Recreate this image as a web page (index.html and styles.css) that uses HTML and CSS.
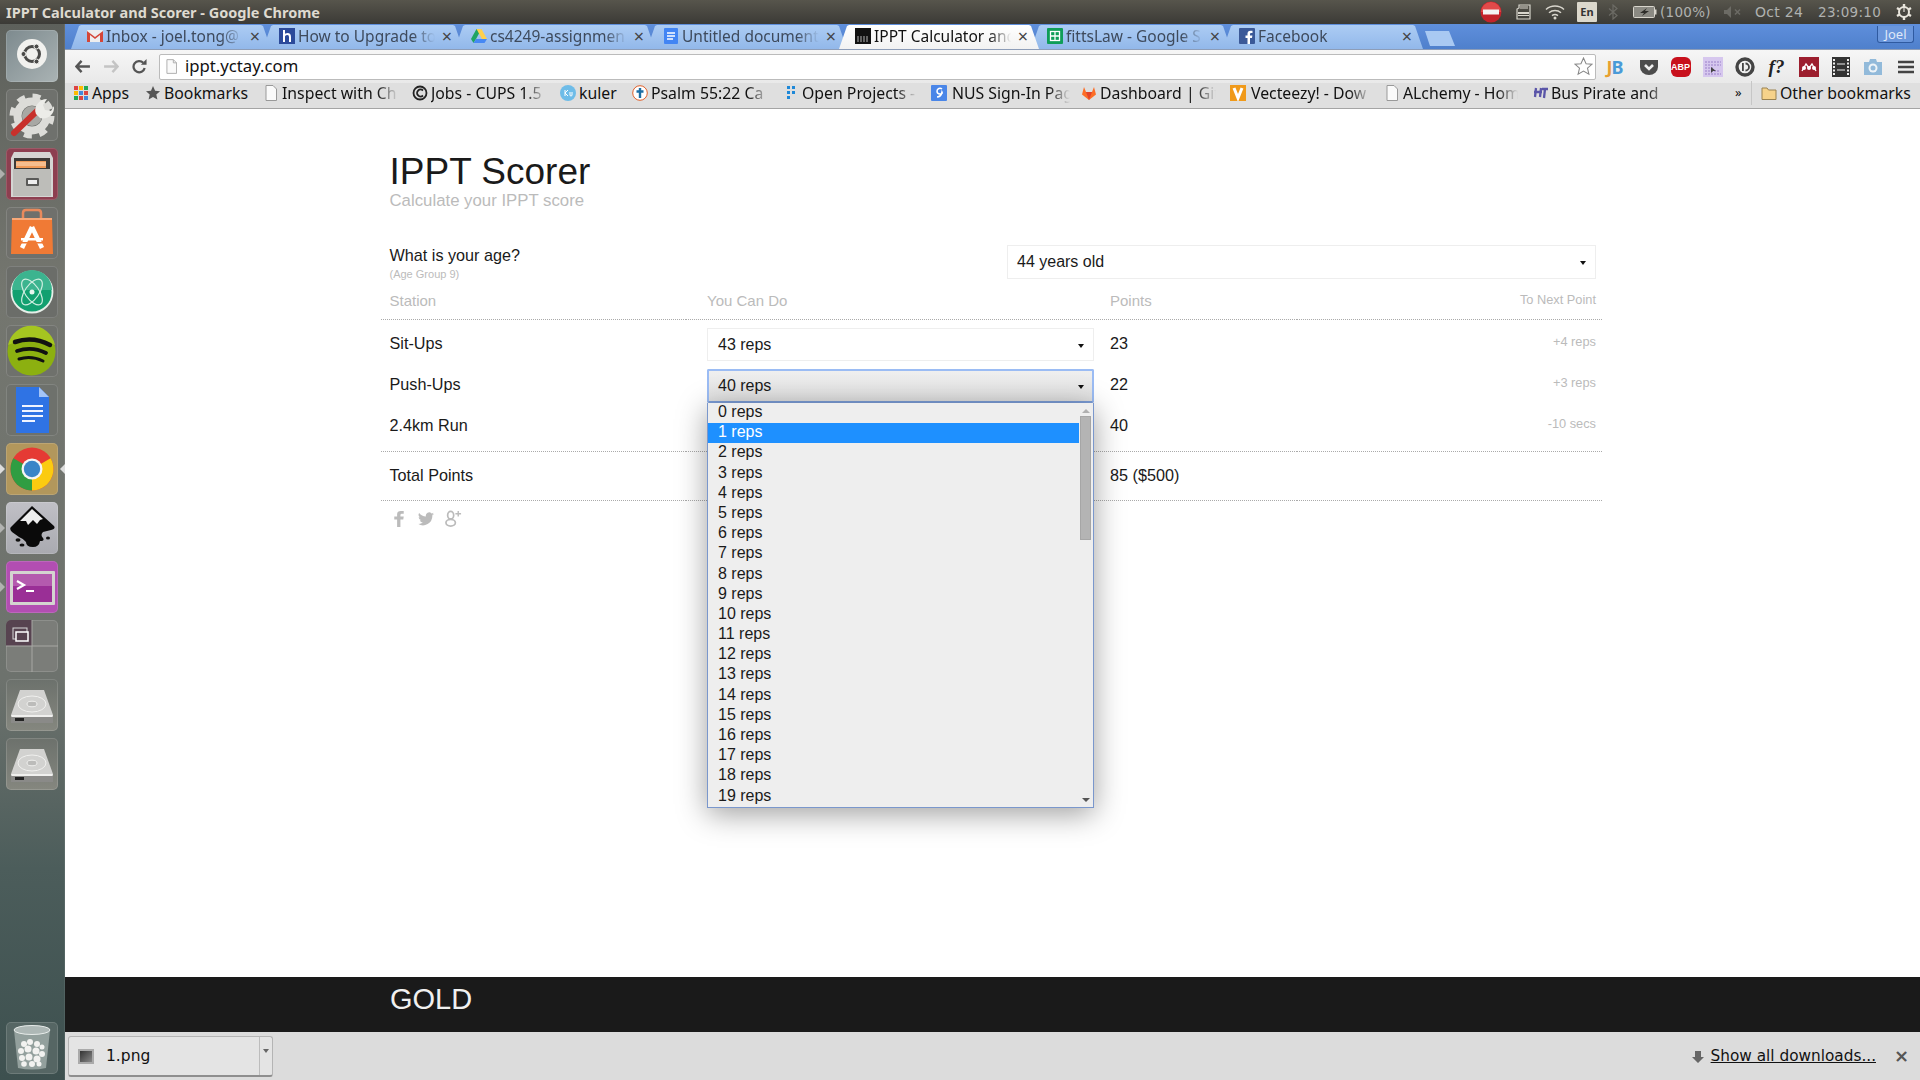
FILE: index.html
```html
<!DOCTYPE html>
<html lang="en">
<head>
<meta charset="utf-8">
<title>IPPT Calculator and Scorer</title>
<link rel="stylesheet" href="styles.css">
</head>
<body>
<div class="desktop">
  <header class="panel">
    <div class="panel-title">IPPT Calculator and Scorer - Google Chrome</div>
    <div class="indicators">
      <svg class="ind ind-stop" viewBox="0 0 22 22"><circle cx="11" cy="11" r="10.500" fill="#c4232b"/><path d="M1 11a10 10 0 0 1 20 0z" fill="#e04a4a"/><rect x="3" y="8.500" width="16" height="5" fill="#f4f4f4"/></svg>
      <svg class="ind ind-sd" viewBox="0 0 16 16"><path d="M3 1h11v14H1V5l2-1z" fill="none" stroke="#d8d5cc" stroke-width="1.200"/><path d="M2 8h11v2H2zM2 11h11v1H2z" fill="#d8d5cc"/><path d="M5 2v3M7 2v3M9 2v3M11 2v3" stroke="#d8d5cc"/></svg>
      <svg class="ind ind-wifi" viewBox="0 0 20 16"><path d="M1 5.500c5-4.600 13-4.600 18 0M4 8.700c3.400-3 8.600-3 12 0M7 11.700c1.700-1.400 4.300-1.400 6 0" fill="none" stroke="#d8d5cc" stroke-width="1.500"/><circle cx="10" cy="14" r="1.500" fill="#d8d5cc"/></svg>
      <span class="ind-en">En</span>
      <svg class="ind ind-bt" viewBox="0 0 10 16"><path d="M1 4.500l8 7-4 3.500V1l4 3.500-8 7" fill="none" stroke="#6c6b65" stroke-width="1.200"/></svg>
      <svg class="ind ind-batt" viewBox="0 0 24 12"><rect x=".5" y=".5" width="21" height="11" rx="1" fill="#8b8a83" stroke="#d8d5cc"/><rect x="22" y="3.500" width="1.500" height="5" fill="#d8d5cc"/><path d="M14 2L7 7h4l-2 3 7-5h-4z" fill="#2e2d29"/></svg>
      <span class="ind-text ind-pct">(100%)</span>
      <svg class="ind ind-vol" viewBox="0 0 18 12"><path d="M0 4h3l4-4v12L3 8H0z" fill="#6c6b65"/><path d="M11 3.500l5 5M16 3.500l-5 5" stroke="#6c6b65" stroke-width="1.500"/></svg>
      <span class="ind-text ind-date">Oct 24</span>
      <span class="ind-text ind-time">23:09:10</span>
      <svg class="ind ind-gear" viewBox="0 0 16 16"><circle cx="8" cy="8" r="5" fill="none" stroke="#e8e5dc" stroke-width="2"/><path d="M8 0v3M1 4l2.500 1.500M15 4l-2.500 1.500M1 12l2.500-1.500M15 12l-2.500-1.500M8 16v-3" stroke="#e8e5dc" stroke-width="2.400"/><path d="M8 4v5" stroke="#3c3b37" stroke-width="2"/><path d="M8 3v5" stroke="#e8e5dc" stroke-width="1.200"/></svg>
    </div>
  </header>

  <div class="workarea">
    <nav class="launcher">
      <div class="tile tile-dash"><svg viewBox="0 0 52 52"><circle cx="26" cy="24" r="15" fill="#f1f1ee"/><circle cx="26" cy="24" r="7.500" fill="none" stroke="#4a4a48" stroke-width="3"/><circle cx="17.500" cy="24" r="2.500" fill="#4a4a48" stroke="#f1f1ee"/><circle cx="30.500" cy="16.500" r="2.500" fill="#4a4a48" stroke="#f1f1ee"/><circle cx="30.500" cy="31.500" r="2.500" fill="#4a4a48" stroke="#f1f1ee"/></svg></div>
      <div class="tile tile-set"><svg viewBox="0 0 52 52"><circle cx="26" cy="27" r="20" fill="none" stroke="#dcdcd8" stroke-width="5" stroke-dasharray="8 7.700"/><circle cx="26" cy="27" r="14.500" fill="none" stroke="#dcdcd8" stroke-width="8"/><circle cx="26" cy="27" r="10" fill="#a8a8a4"/><path d="M8 44l24-23" stroke="#c8302b" stroke-width="6" stroke-linecap="round"/><path d="M30 25c-3-7 3-15 11-15l-4 6 2 5 6 1 3-5c1 9-7 14-14 12z" fill="#ececE8"/></svg></div>
      <div class="tile tile-files running"><svg viewBox="0 0 52 52"><path d="M8 4h36l3 6v39H5V10z" fill="#d5d5d3"/><rect x="8" y="10" width="36" height="14" fill="#3d3b38"/><rect x="10" y="13" width="30" height="7" fill="#ef9a58"/><path d="M10 15h30M10 17h30" stroke="#fbe0c4"/><rect x="7" y="21" width="38" height="27" fill="#bdbdb9"/><rect x="20" y="30" width="13" height="8" rx="1" fill="#5a5a58"/><rect x="22" y="32" width="9" height="4" fill="#eee"/></svg></div>
      <div class="tile tile-soft"><svg viewBox="0 0 52 52"><path d="M17 12V6q0-3 3-3h12q3 0 3 3v6" fill="none" stroke="#e98a5c" stroke-width="2.500"/><path d="M6 11h40l1 36H5z" fill="#f07a35"/><path d="M6 11h40v2H6z" fill="#f8a878"/><path d="M26 20l-10 21M26 20l10 21" fill="none" stroke="#fff" stroke-width="4.500"/><rect x="15" y="31" width="22" height="2.500" fill="#fff"/><rect x="13" y="35" width="26" height="1.500" fill="#f07a35"/></svg></div>
      <div class="tile tile-atom"><svg viewBox="0 0 52 52"><circle cx="26" cy="26" r="20.500" fill="#12a070" stroke="#e6efe9" stroke-width="1.800"/><path d="M6 24a20 20 0 0 1 40 0z" fill="#3cb48f"/><g fill="none" stroke="#cfeee0" stroke-width="1.200"><ellipse cx="26" cy="26" rx="7" ry="15" transform="rotate(-35 26 26)"/><ellipse cx="26" cy="26" rx="7" ry="15" transform="rotate(35 26 26)"/></g><circle cx="26" cy="26" r="2.500" fill="#e6f5ee"/></svg></div>
      <div class="tile tile-spot"><svg viewBox="0 0 52 52"><circle cx="25.500" cy="26.500" r="24" fill="#8cb010"/><path d="M2 20a24 24 0 0 1 47 0q-23-10-47 0z" fill="#a5c520"/><g fill="none" stroke="#111" stroke-linecap="round"><path d="M9 17q18-6 35 3" stroke-width="4.500"/><path d="M11 26q15-5 29 2" stroke-width="3.800"/><path d="M13 34q12-4 24 2" stroke-width="3"/></g></svg></div>
      <div class="tile tile-docs"><svg viewBox="0 0 52 52"><path d="M10 3h23l10 10v36H10z" fill="#2f73e4"/><path d="M33 3l10 10H33z" fill="#a4c4f6"/><path d="M16 22h21M16 27h21M16 32h21M16 37h13" stroke="#f0f4ff" stroke-width="2.200"/></svg></div>
      <div class="tile tile-chrome focused"><svg viewBox="0 0 52 52"><circle cx="26" cy="26" r="21.500" fill="#e53a34"/><path d="M26 26L44.600 15.300A21.500 21.500 0 0 1 26 47.500z" fill="#fbcb10"/><path d="M26 26V47.500A21.500 21.500 0 0 1 7.400 15.300z" fill="#2f9d42"/><circle cx="26" cy="26" r="10.500" fill="#f5f5f5"/><circle cx="26" cy="26" r="8.200" fill="#3a85c8"/></svg></div>
      <div class="tile tile-ink running"><svg viewBox="0 0 52 52"><path d="M26 4L48 24q2 3-3 4l-8 2q-3 3 0 6 2 3-3 3-1 6-7 6-7 0-7-5-2-3-7-5l-7-5q-3-3-1-5z" fill="#0a0a0a"/><path d="M26 7l11 10-3 1-3 4-4-4-5 5-2-4-6 0z" fill="#eee"/><ellipse cx="12" cy="38" rx="2.500" ry="1.800" fill="#111"/><ellipse cx="16" cy="43" rx="2.500" ry="1.500" fill="#111"/><ellipse cx="42" cy="36" rx="2" ry="1.500" fill="#111"/></svg></div>
      <div class="tile tile-term running"><svg viewBox="0 0 52 52"><rect x="4" y="10" width="45" height="34" rx="1" fill="#d4d4d0"/><rect x="7" y="13" width="39" height="28" fill="#9a2f96"/><path d="M7 13h39v12H7z" fill="#b45aae"/><path d="M11 20l7 4-7 4" fill="none" stroke="#fff" stroke-width="2.200"/><rect x="20" y="29" width="8" height="2" fill="#fff"/></svg></div>
      <div class="tile tile-ws"><svg viewBox="0 0 52 52"><rect x="0" y="0" width="26" height="26" fill="#574350"/><path d="M26 0v52M0 26h52" stroke="#a8a8a4" stroke-width="1"/><rect x="7" y="8" width="14" height="11" fill="none" stroke="#d8d8d8"/><rect x="10" y="12" width="12" height="9" fill="#574350" stroke="#fff" stroke-width="1.500"/></svg></div>
      <div class="tile tile-hdd"><svg viewBox="0 0 52 52"><path d="M14 11h24l9 25H5z" fill="#d2d2d0"/><path d="M5 36h42v8H5z" fill="#8a8a88"/><path d="M5 36h42l-.5 2H5.500z" fill="#f0f0ee"/><rect x="9" y="39" width="9" height="3" fill="#222"/><ellipse cx="26" cy="25" rx="14" ry="8" fill="none" stroke="#f0f0ee"/><ellipse cx="26" cy="25" rx="5" ry="2.800" fill="#bcbcba" stroke="#f0f0ee"/></svg></div>
      <div class="tile tile-hdd"><svg viewBox="0 0 52 52"><path d="M14 11h24l9 25H5z" fill="#d2d2d0"/><path d="M5 36h42v8H5z" fill="#8a8a88"/><path d="M5 36h42l-.5 2H5.500z" fill="#f0f0ee"/><rect x="9" y="39" width="9" height="3" fill="#222"/><ellipse cx="26" cy="25" rx="14" ry="8" fill="none" stroke="#f0f0ee"/><ellipse cx="26" cy="25" rx="5" ry="2.800" fill="#bcbcba" stroke="#f0f0ee"/></svg></div>
      <div class="tile tile-trash"><svg viewBox="0 0 52 52"><path d="M8 8l4 38q14 3 28 0l4-38z" fill="#93a09d"/><ellipse cx="26" cy="8" rx="18" ry="4.500" fill="#aeb8b6" stroke="#e8ecea"/><g fill="#f2f2f0"><circle cx="18" cy="22" r="3"/><circle cx="24" cy="20" r="3"/><circle cx="31" cy="22" r="3"/><circle cx="36" cy="25" r="2.500"/><circle cx="15" cy="29" r="3"/><circle cx="22" cy="27" r="3.500"/><circle cx="30" cy="29" r="3.500"/><circle cx="36" cy="32" r="3"/><circle cx="16" cy="36" r="3"/><circle cx="23" cy="35" r="3.500"/><circle cx="31" cy="37" r="3.500"/><circle cx="18" cy="42" r="2.800"/><circle cx="26" cy="42" r="3"/><circle cx="33" cy="42" r="2.500"/></g></svg></div>
    </nav>

    <div class="browser">
      <div class="tabstrip">
        <div class="tab">
          <svg class="fav" viewBox="0 0 16 16"><rect y="2" width="16" height="12" rx="1" fill="#eee"/><path d="M0 3l8 6 8-6v11h-3V7L8 11 3 7v7H0z" fill="#d44638"/></svg>
          <span class="tab-title">Inbox - joel.tong@</span><span class="tab-x">×</span>
        </div>
        <div class="tab">
          <svg class="fav" viewBox="0 0 16 16"><rect width="16" height="16" fill="#2c4a9a"/><path d="M5 2v12M5 8q1-2 3.500-2t2.500 3v5" fill="none" stroke="#fff" stroke-width="2"/></svg>
          <span class="tab-title">How to Upgrade to</span><span class="tab-x">×</span>
        </div>
        <div class="tab">
          <svg class="fav" viewBox="0 0 16 16"><path d="M5.500 1h5L5 11l-2.500 4L0 11z" fill="#1fa463"/><path d="M5.500 1h5L16 11h-5z" fill="#ffd04b"/><path d="M2.500 15L5 11h11l-2.500 4z" fill="#4688f4"/></svg>
          <span class="tab-title">cs4249-assignmen</span><span class="tab-x">×</span>
        </div>
        <div class="tab">
          <svg class="fav" viewBox="0 0 16 16"><rect x="1" width="14" height="16" rx="1" fill="#4285f4"/><path d="M4 5h8M4 8h8M4 11h6" stroke="#fff" stroke-width="1.300"/></svg>
          <span class="tab-title">Untitled document</span><span class="tab-x">×</span>
        </div>
        <div class="tab tab-active">
          <svg class="fav" viewBox="0 0 16 16"><rect width="16" height="16" fill="#111"/><path d="M2 9h12M2 11h12M2 13h12" stroke="#ddd" stroke-width=".8" stroke-dasharray="2 1"/></svg>
          <span class="tab-title">IPPT Calculator and</span><span class="tab-x">×</span>
        </div>
        <div class="tab">
          <svg class="fav" viewBox="0 0 16 16"><rect width="16" height="16" rx="1" fill="#0f9d58"/><rect x="3.500" y="3.500" width="9" height="9" fill="none" stroke="#fff" stroke-width="1.300"/><path d="M3.500 8h9M8 3.500v9" stroke="#fff" stroke-width="1.300"/></svg>
          <span class="tab-title">fittsLaw - Google S</span><span class="tab-x">×</span>
        </div>
        <div class="tab">
          <svg class="fav" viewBox="0 0 16 16"><rect width="16" height="16" rx="1" fill="#3b5998"/><path d="M11 16V10h2l.4-2.500H11V6q0-1 1-1h1.500V2.700H11.500Q8.500 2.700 8.500 5.700V7.500H6.500V10h2v6z" fill="#fff"/></svg>
          <span class="tab-title tab-title-plain">Facebook</span><span class="tab-x">×</span>
        </div>
        <div class="newtab"></div>
        <div class="profile">Joel</div>
      </div>

      <div class="toolbar">
        <svg class="nav" viewBox="0 0 16 14"><path d="M7 1L1.500 7 7 13M2 7h14" fill="none" stroke="#555" stroke-width="2.600"/></svg>
        <svg class="nav nav-fwd" viewBox="0 0 16 14"><path d="M9 1l5.500 6L9 13M14 7H0" fill="none" stroke="#c4c4c4" stroke-width="2.600"/></svg>
        <svg class="nav nav-rel" viewBox="0 0 16 16"><path d="M13.500 9.500A6 6 0 1 1 12 4" fill="none" stroke="#555" stroke-width="2.400"/><path d="M9.500 6h6V0z" fill="#555"/></svg>
        <div class="omnibox">
          <svg class="doc" viewBox="0 0 12 16"><path d="M1 .5h7l3.500 3.500v11.500H1z" fill="#fafafa" stroke="#aaa"/><path d="M8 .5V4h3.500" fill="none" stroke="#aaa"/></svg>
          <span class="url">ippt.yctay.com</span>
          <svg class="star" viewBox="0 0 20 20"><path d="M10 1l2.700 6 6.300.6-4.800 4.200 1.500 6.400L10 14.800l-5.700 3.400 1.500-6.400L1 7.600 7.300 7z" fill="#fff" stroke="#888" stroke-width="1.100"/></svg>
        </div>
        <div class="ext-row">
          <span class="ext ext-jb"><span class="jb-j">J</span><span class="jb-b">B</span></span>
          <svg class="ext" viewBox="0 0 20 20"><path d="M1 3h18v7a9 8 0 0 1-18 0z" fill="#4c4c4c"/><path d="M6 8l4 4 4-4" fill="none" stroke="#eee" stroke-width="2.600"/></svg>
          <span class="ext ext-abp">ABP</span>
          <svg class="ext" viewBox="0 0 20 20"><rect width="20" height="20" fill="#d6c7ee"/><path d="M2 5h16M2 8h16M2 11h8M2 14h14M2 17h16" stroke="#9a80c8" stroke-dasharray="2 1"/><path d="M8 10v6l2-2h3z" fill="#444"/></svg>
          <svg class="ext" viewBox="0 0 20 20"><circle cx="10" cy="10" r="8" fill="none" stroke="#444" stroke-width="3.400"/><rect x="7" y="6" width="1.800" height="8" fill="#444"/><path d="M10.500 6.500a3.500 3.500 0 0 1 0 7" fill="none" stroke="#444" stroke-width="1.800"/></svg>
          <span class="ext ext-f">f?</span>
          <svg class="ext" viewBox="0 0 20 20"><rect width="20" height="20" fill="#9c1e2e"/><circle cx="5" cy="11" r="2" fill="#fff"/><circle cx="10" cy="11" r="2" fill="#fff"/><circle cx="15" cy="11" r="2" fill="#fff"/><path d="M3 14l4-7 3 4 3-4 4 7" fill="none" stroke="#fff" stroke-width="1.300"/></svg>
          <svg class="ext" viewBox="0 0 20 20"><rect x="1" width="18" height="20" fill="#333"/><path d="M3 2v16M17 2v16" stroke="#eee" stroke-width="2" stroke-dasharray="2 1.500"/><path d="M6 7h8M6 13h8" stroke="#eee"/></svg>
          <svg class="ext" viewBox="0 0 20 20"><path d="M1 5h5l1-3h6l1 3h5v13H1z" fill="#92bada"/><circle cx="10" cy="11" r="4.500" fill="#eef4f8"/><circle cx="10" cy="11" r="2.500" fill="#92bada"/></svg>
          <svg class="ext ext-menu" viewBox="0 0 16 14"><path d="M0 2h16M0 7h16M0 12h16" stroke="#444" stroke-width="2.600"/></svg>
        </div>
      </div>

      <div class="bookmarks">
        <div class="bm bm-apps"><svg class="fav" viewBox="0 0 16 16"><g><rect x="1" y="1" width="4" height="4" fill="#d44"/><rect x="6" y="1" width="4" height="4" fill="#fb0"/><rect x="11" y="1" width="4" height="4" fill="#2a5"/><rect x="1" y="6" width="4" height="4" fill="#fb0"/><rect x="6" y="6" width="4" height="4" fill="#48d"/><rect x="11" y="6" width="4" height="4" fill="#d44"/><rect x="1" y="11" width="4" height="4" fill="#2a5"/><rect x="6" y="11" width="4" height="4" fill="#d44"/><rect x="11" y="11" width="4" height="4" fill="#48d"/></g></svg><span class="bm-text">Apps</span></div>
        <div class="bm bm-book"><svg class="fav" viewBox="0 0 16 16"><path d="M8 1l2.100 4.700 5 .5-3.800 3.300 1.100 5L8 11.900l-4.400 2.600 1.100-5L1 6.200l5-.5z" fill="#555"/></svg><span class="bm-text">Bookmarks</span></div>
        <div class="bm bm-w149"><svg class="fav" viewBox="0 0 12 16"><path d="M1 .5h7l3.500 3.500v11.500H1z" fill="#fafafa" stroke="#999"/></svg><span class="bm-text bm-fade">Inspect with Ch</span></div>
        <div class="bm bm-w148"><svg class="fav" viewBox="0 0 16 16"><circle cx="8" cy="8" r="6.500" fill="none" stroke="#222" stroke-width="1.800"/><path d="M11 5.500a3.500 3.500 0 1 0 0 5" fill="none" stroke="#222" stroke-width="1.800"/></svg><span class="bm-text bm-fade">Jobs - CUPS 1.5</span></div>
        <div class="bm bm-kuler"><svg class="fav" viewBox="0 0 16 16"><circle cx="8" cy="8" r="8" fill="#6ebce8"/><path d="M5 5v6M5 8l3-3M5 8l3 3M10 7v3q0 1 1 1t1-1V7" fill="none" stroke="#fff"/></svg><span class="bm-text">kuler</span></div>
        <div class="bm bm-psalm"><svg class="fav" viewBox="0 0 16 16"><circle cx="8" cy="8" r="7.300" fill="#fff" stroke="#e0602a"/><path d="M8 3v10M4.500 6.500h7" stroke="#1c6ea4" stroke-width="2.400"/></svg><span class="bm-text bm-fade">Psalm 55:22 Ca</span></div>
        <div class="bm bm-w148"><svg class="fav" viewBox="0 0 16 16"><g fill="#1e88d8"><rect x="4" y="1" width="3" height="3"/><rect x="9" y="1" width="3" height="3"/><rect x="4" y="6" width="3" height="3"/><rect x="9" y="6" width="3" height="3"/><rect x="4" y="11" width="3" height="3"/></g></svg><span class="bm-text bm-fade">Open Projects -</span></div>
        <div class="bm bm-nus"><svg class="fav" viewBox="0 0 16 16"><rect width="16" height="16" rx="1" fill="#4a86e8"/><path d="M11 4a3 3 0 0 0-5 2q0 3 3 3t2-2q-1 5-5 5" fill="none" stroke="#fff" stroke-width="1.500"/></svg><span class="bm-text bm-fade">NUS Sign-In Pag</span></div>
        <div class="bm bm-w149"><svg class="fav" viewBox="0 0 16 16"><path d="M8 15L1 9.500 3 2l2 5h6l2-5 2 7.500z" fill="#fc6d26"/><path d="M8 15L5 7h6z" fill="#e24329"/></svg><span class="bm-text bm-fade">Dashboard | Git</span></div>
        <div class="bm bm-vect"><svg class="fav" viewBox="0 0 16 16"><rect width="16" height="16" fill="#f09a1a"/><path d="M4 3l4 10 4-10" fill="none" stroke="#fff" stroke-width="3"/></svg><span class="bm-text bm-fade">Vecteezy! - Dow</span></div>
        <div class="bm bm-w148"><svg class="fav" viewBox="0 0 12 16"><path d="M1 .5h7l3.500 3.500v11.500H1z" fill="#fafafa" stroke="#999"/></svg><span class="bm-text bm-fade">ALchemy - Hom</span></div>
        <div class="bm bm-bus"><svg class="fav" viewBox="0 0 16 16"><path d="M4 3l-1 9M9 3l-1 9M2 7h8M10 4h6M13 4l-1 9" stroke="#5a55a8" stroke-width="2.300" fill="none"/></svg><span class="bm-text bm-fade">Bus Pirate and</span></div>
        <div class="bm-more">»</div>
        <div class="bm bm-other"><svg class="fav" viewBox="0 0 16 16"><path d="M1 3h5l1.500 2H15v9.500H1z" fill="#f6d28a" stroke="#9a8250"/></svg><span class="bm-text">Other bookmarks</span></div>
      </div>

      <main class="page">
        <section class="scorer">
          <h1 class="title">IPPT Scorer</h1>
          <p class="subtitle">Calculate your IPPT score</p>

          <div class="age-row">
            <div class="age-label">
              <div class="label">What is your age?</div>
              <div class="sublabel">(Age Group 9)</div>
            </div>
            <div class="select select-age"><span>44 years old</span><i class="caret"></i></div>
          </div>

          <div class="grid head">
            <div>Station</div>
            <div>You Can Do</div>
            <div>Points</div>
            <div class="next-head">To Next Point</div>
          </div>

          <div class="rows">
            <div class="grid row">
              <div class="label">Sit-Ups</div>
              <div class="select"><span>43 reps</span><i class="caret"></i></div>
              <div class="label">23</div>
              <div class="next">+4 reps</div>
            </div>
            <div class="grid row">
              <div class="label">Push-Ups</div>
              <div class="select-wrap">
                <div class="select select-open"><span>40 reps</span><i class="caret"></i></div>
                <div class="popup">
                  <div class="opts">
                    <div class="opt">0 reps</div>
                    <div class="opt opt-on">1 reps</div>
                    <div class="opt">2 reps</div>
                    <div class="opt">3 reps</div>
                    <div class="opt">4 reps</div>
                    <div class="opt">5 reps</div>
                    <div class="opt">6 reps</div>
                    <div class="opt">7 reps</div>
                    <div class="opt">8 reps</div>
                    <div class="opt">9 reps</div>
                    <div class="opt">10 reps</div>
                    <div class="opt">11 reps</div>
                    <div class="opt">12 reps</div>
                    <div class="opt">13 reps</div>
                    <div class="opt">14 reps</div>
                    <div class="opt">15 reps</div>
                    <div class="opt">16 reps</div>
                    <div class="opt">17 reps</div>
                    <div class="opt">18 reps</div>
                    <div class="opt">19 reps</div>
                  </div>
                  <div class="scroll">
                    <i class="arrow-up"></i>
                    <div class="thumb"></div>
                    <i class="arrow-down"></i>
                  </div>
                </div>
              </div>
              <div class="label">22</div>
              <div class="next">+3 reps</div>
            </div>
            <div class="grid row row-last">
              <div class="label">2.4km Run</div>
              <div></div>
              <div class="label">40</div>
              <div class="next">-10 secs</div>
            </div>
          </div>

          <div class="grid total">
            <div class="label">Total Points</div>
            <div></div>
            <div class="label">85 ($500)</div>
            <div></div>
          </div>

          <div class="social">
            <svg class="soc soc-f" viewBox="0 0 12 18"><path d="M4 18V10H1V7h3V4.500Q4 1 8 1h3v3H9Q7.500 4 7.500 5.500V7H11l-.5 3h-3v8z" fill="#bbb"/></svg>
            <svg class="soc soc-t" viewBox="0 0 24 20"><path d="M24 2.500a10 10 0 0 1-2.800.8 5 5 0 0 0 2.200-2.700 10 10 0 0 1-3.100 1.200 4.900 4.900 0 0 0-8.400 4.500A14 14 0 0 1 1.700 1 4.900 4.900 0 0 0 3.200 7.600 5 5 0 0 1 1 7a4.900 4.900 0 0 0 3.900 4.800 5 5 0 0 1-2.200.1 4.900 4.900 0 0 0 4.600 3.400A10 10 0 0 1 0 17.300 14 14 0 0 0 21.500 5q0-.3 0-.6A10 10 0 0 0 24 2.500z" fill="#bbb"/></svg>
            <svg class="soc soc-g" viewBox="0 0 18 18"><ellipse cx="6" cy="5.500" rx="3.200" ry="4" fill="none" stroke="#bbb" stroke-width="1.800"/><ellipse cx="6" cy="13.500" rx="5" ry="3.500" fill="none" stroke="#bbb" stroke-width="1.800"/><path d="M14 1v6M11 4h6" stroke="#bbb" stroke-width="1.500"/></svg>
          </div>
        </section>
        <footer class="gold"><span>GOLD</span></footer>
      </main>

      <div class="shelf">
        <div class="dl-item">
          <div class="dl-main"><i class="dl-thumb"></i><span class="dl-name">1.png</span></div>
          <div class="dl-drop"><i class="dl-caret"></i></div>
        </div>
        <div class="shelf-right">
          <svg class="dl-arrow" viewBox="0 0 12 12"><path d="M3 0h6v6h3l-6 6-6-6h3z" fill="#666"/></svg>
          <span class="dl-all">Show all downloads...</span>
          <span class="dl-close">×</span>
        </div>
      </div>
    </div>
  </div>
</div>
</body>
</html>
```

FILE: styles.css
```css
* { box-sizing: border-box; }
html, body { margin: 0; height: 100%; overflow: hidden; }
body { font-family: "Liberation Sans", Arial, sans-serif; color: #1a1a1a; background: #fff; }
.desktop { width: 1920px; height: 1080px; display: flex; flex-direction: column; }

/* Top panel */
.panel { height: 24px; flex: none; display: flex; align-items: center; justify-content: space-between; background: linear-gradient(#57554c, #3b3a36); }
.panel-title { padding-left: 6px; font: 700 14.500px "Noto Sans", sans-serif; color: #dedad0; }
.indicators { display: flex; align-items: center; height: 24px; }
.ind { display: block; flex: none; }
.ind-stop { width: 22px; height: 22px; margin-right: 14px; }
.ind-sd { width: 16px; height: 16px; margin-right: 13px; }
.ind-wifi { width: 20px; height: 16px; margin-right: 12px; }
.ind-en { width: 20px; height: 20px; margin-right: 11px; background: #dcd8cc; color: #333; font: 700 11px/20px "Noto Sans", sans-serif; text-align: center; border-radius: 1px; }
.ind-bt { width: 10px; height: 16px; margin-right: 15px; }
.ind-batt { width: 24px; height: 12px; margin-right: 3px; }
.ind-text { font: 14px "DejaVu Sans", sans-serif; color: #b0b2b0; white-space: nowrap; letter-spacing: .3px; }
.ind-pct { width: 52px; margin-right: 12px; font-size: 13.500px; }
.ind-vol { width: 18px; height: 12px; margin-right: 13px; }
.ind-date { width: 48px; margin-right: 15px; font-size: 14px; }
.ind-time { width: 66px; margin-right: 12px; font-size: 13.500px; }
.ind-gear { width: 16px; height: 16px; margin-right: 8px; }

/* Launcher */
.workarea { flex: 1; min-height: 0; display: flex; }
.launcher { width: 65px; flex: none; display: flex; flex-direction: column; gap: 7px; padding: 6px 7px 6px 6px; background: linear-gradient(#5d605b 0%, #74766f 25%, #6d726d 62%, #4c5d5b 80%, #3d504f 100%); box-shadow: inset -1px 0 0 rgba(255,255,255,.08); }
.tile { position: relative; width: 52px; height: 52px; flex: none; border-radius: 5px; box-shadow: inset 0 0 0 1px rgba(255,255,255,.14); background: #777974; }
.tile svg { display: block; width: 52px; height: 52px; border-radius: 5px; overflow: visible; }
.tile-dash { background: linear-gradient(135deg, #7d8a8e, #aab3b4); }
.tile-set { background: #6f716d; }
.tile-files { background: #8d3f50; }
.tile-soft { background: #6f706c; }
.tile-atom { background: #6b6d69; }
.tile-spot { background: #6f716c; }
.tile-docs { background: #6e716c; }
.tile-chrome { background: #b2975c; }
.tile-ink { background: linear-gradient(#c0c0c6, #a9aab0); }
.tile-term { background: #b24eb2; }
.tile-ws { background: #7b7d79; overflow: hidden; }
.tile-hdd { background: linear-gradient(#6c716c, #85877f); }
.tile-trash { margin-top: auto; background: #566664; }
.running::before, .focused::before { content: ""; position: absolute; left: -6px; top: 21px; border-left: 5px solid #ddd; border-top: 5px solid transparent; border-bottom: 5px solid transparent; }
.running::before { opacity: .6; }
.focused::after { content: ""; position: absolute; right: -7px; top: 21px; border-right: 5px solid #ddd; border-top: 5px solid transparent; border-bottom: 5px solid transparent; }

/* Browser */
.browser { flex: 1; min-width: 0; display: flex; flex-direction: column; }
.tabstrip { position: relative; height: 25px; flex: none; display: flex; align-items: flex-end; padding-left: 6px; background: linear-gradient(#5f8fdc, #4f80cc); }
.tab { position: relative; width: 200px; height: 24px; flex: none; margin-right: -8px; padding: 0 0 2px 16px; display: flex; align-items: center; background: linear-gradient(#acccf4, #92b8ea); clip-path: polygon(0 100%, 8px 1px, 10px 0, 190px 0, 192px 1px, 200px 100%); font: 15.500px "Noto Sans", sans-serif; color: #3e4a5c; }
.tab-active { z-index: 2; background: linear-gradient(#fff, #f2f2f2); color: #111; }
.fav { width: 16px; height: 16px; flex: none; display: block; }
.tab-title { width: 137px; flex: none; margin-left: 3px; white-space: nowrap; -webkit-mask-image: linear-gradient(90deg, #000 84%, transparent 100%); mask-image: linear-gradient(90deg, #000 84%, transparent 100%); }
.tab-x { width: 14px; margin-left: 5px; text-align: center; font-size: 18px; line-height: 20px; color: #444; }
.newtab { width: 30px; height: 15px; margin: 0 0 3px 10px; background: #a9c9f2; clip-path: polygon(5px 100%, 0 0, 24px 0, 30px 100%); align-self: flex-end; }
.profile { position: absolute; right: 6px; top: 2px; width: 37px; height: 17px; border: 1px solid #2f5aa0; border-top: 0; border-radius: 0 0 3px 3px; background: #6a96dc; color: #dfe8f8; font: 13px/16px "Noto Sans", sans-serif; text-align: center; }

.toolbar { height: 34px; flex: none; display: flex; align-items: center; padding-left: 10px; background: linear-gradient(#f6f6f6, #e9e9e9); border-top: 1px solid #8d9db8; }
.nav { width: 15px; height: 13px; display: block; flex: none; }
.nav-fwd { margin-left: 14px; }
.nav-rel { margin-left: 13px; width: 15px; height: 15px; }
.omnibox { width: 1437px; height: 26px; margin-left: 12px; flex: none; display: flex; align-items: center; padding-left: 6px; background: #fff; border: 1px solid #bbb; border-radius: 2px; }
.doc { width: 11px; height: 15px; flex: none; }
.url { margin: -2px 0 0 8px; font: 16.700px "Noto Sans", sans-serif; color: #111; }
.star { width: 19px; height: 19px; margin-left: auto; margin-right: 2px; flex: none; }
.ext-row { display: flex; align-items: center; margin-left: 10.500px; gap: 12px; }
.ext { width: 20px; height: 20px; display: block; flex: none; }
.ext-jb { font: 700 18px/20px "Noto Sans", sans-serif; white-space: nowrap; letter-spacing: -1px; }
.jb-j { color: #e8a030; }
.jb-b { color: #4a9ad8; }
.ext-abp { border-radius: 6px; background: #c8101c; color: #fff; font: 700 9px/20px "Liberation Sans", sans-serif; text-align: center; }
.ext-f { font: italic 700 19px/20px "Liberation Serif", serif; color: #222; text-align: center; }
.ext-menu { width: 16px; height: 14px; margin-left: 3px; }

.bookmarks { height: 26px; flex: none; display: flex; align-items: center; padding: 0 0 5px 8px; background: #dfdfdf; border-bottom: 1px solid #a4a4a4; font: 15.800px "Noto Sans", sans-serif; color: #111; }
.bm { display: flex; align-items: center; flex: none; white-space: nowrap; }
.bm-text { margin-left: 3px; }
.bm-fade { -webkit-mask-image: linear-gradient(90deg, #000 82%, transparent 100%); mask-image: linear-gradient(90deg, #000 82%, transparent 100%); }
.bm-apps { width: 72px; }
.bm-book { width: 118px; }
.bm-w149 { width: 149px; }
.bm-w149 .bm-text { width: 116px; }
.bm-w148 { width: 148px; }
.bm-w148 .bm-text { width: 115px; }
.bm-kuler { width: 72px; }
.bm-psalm { width: 151px; }
.bm-psalm .bm-text { width: 118px; }
.bm-nus { width: 150px; }
.bm-nus .bm-text { width: 118px; margin-left: 5px; }
.bm-vect { width: 154px; }
.bm-vect .bm-text { width: 120px; margin-left: 5px; }
.bm-bus { width: 203px; }
.bm-bus .bm-text { width: 118px; }
.bm-more { width: 17px; font-size: 13px; border-right: 1px solid #c6c6c6; height: 24px; line-height: 22px; flex: none; }
.bm-other { margin-left: 9px; }

/* Page */
.page { flex: 1; min-height: 0; display: flex; flex-direction: column; background: #fff; }
.scorer { flex: 1; min-height: 0; width: 1223px; margin-left: 315px; padding-top: 43px; }
.title { margin: 0 0 0 9.500px; font-size: 37px; line-height: 40px; font-weight: 400; color: #1a1a1a; }
.subtitle { margin: -1px 0 0 9.500px; font-size: 16.800px; line-height: 20px; color: #bbb; }
.age-row { display: flex; justify-content: space-between; align-items: flex-start; margin-top: 34px; padding: 0 7px 0 9.500px; height: 46px; }
.label { font-size: 16.200px; line-height: 20px; color: #1a1a1a; }
.sublabel { margin-top: 2px; font-size: 11px; line-height: 14px; color: #bbb; }
.select { position: relative; display: flex; align-items: center; height: 33px; padding-left: 10px; border: 1px solid #eee; background: #fff; font-size: 16px; color: #1a1a1a; }
.select-age { width: 589px; height: 34px; padding-left: 9px; }
.caret { position: absolute; right: 9px; top: 50%; margin-top: -1px; border-top: 4px solid #111; border-left: 3.500px solid transparent; border-right: 3.500px solid transparent; }
.grid { display: grid; grid-template-columns: 317.500px 403px 1fr auto; padding: 0 7px 0 9.500px; }
.head { height: 29px; font-size: 15px; line-height: 20px; color: #bbb; border-bottom: 1px solid transparent; border-image: repeating-linear-gradient(90deg, #aaa 0 1px, transparent 1px 2px) 1; padding-top: 0; }
.next-head { font-size: 12.800px; line-height: 18px; }
.rows { padding-top: 8px; }
.row { height: 41px; }
.row > .label { margin-top: 5px; }
.row > .select, .select-wrap > .select { width: 387px; margin-left: 0; }
.select-wrap { position: relative; }
.select-open { height: 34px; border: 2px solid #9bbcf4; border-bottom-color: #7d9ed8; border-radius: 2px; background: linear-gradient(#efefef, #e0e0e0); padding-left: 9px; }
.select-open .caret { right: 8px; }
.next { font-size: 12.800px; line-height: 16px; margin-top: 6px; color: #bbb; text-align: right; }
.row-last { height: 42px; border-bottom: 1px solid transparent; border-image: repeating-linear-gradient(90deg, #aaa 0 1px, transparent 1px 2px) 1; }
.total { height: 49px; padding-top: 13px; border-bottom: 1px solid transparent; border-image: repeating-linear-gradient(90deg, #aaa 0 1px, transparent 1px 2px) 1; }
.social { display: flex; align-items: flex-start; padding: 9px 0 0 12.500px; }
.soc { display: block; flex: none; height: 17px; }
.soc-f { width: 12px; }
.soc-t { width: 16px; height: 14px; margin: 2px 0 0 13px; }
.soc-g { width: 17px; margin-left: 11px; }

/* Popup */
.popup { position: absolute; z-index: 5; left: 0; top: 34px; width: 387px; height: 405px; display: flex; background: #eee; border: 1px solid #7a97cc; border-top: 0; box-shadow: 0 6px 28px rgba(0,0,0,.38); }
.opts { width: 371px; flex: none; }
.opt { height: 20.200px; padding-left: 10px; font-size: 16px; line-height: 18px; color: #1a1a1a; }
.opt-on { background: #1e90ff; color: #fff; }
.scroll { position: relative; flex: 1; padding-top: 13px; }
.thumb { width: 11px; height: 124px; margin-left: 1px; background: #b4b4b4; border: 1px solid #a6a6a6; }
.arrow-up, .arrow-down { position: absolute; left: 3px; border-left: 4px solid transparent; border-right: 4px solid transparent; }
.arrow-up { top: 6px; border-bottom: 4px solid #b0b0b0; }
.arrow-down { bottom: 5px; border-top: 4px solid #555; }

/* Result bar */
.gold { height: 55px; flex: none; padding-left: 325px; background: #1a1a1a; color: #f0f0f0; font-size: 29px; line-height: 45px; }

/* Download shelf */
.shelf { height: 48px; flex: none; display: flex; align-items: center; justify-content: space-between; padding: 0 14px 0 3px; background: #dcdcdc; }
.dl-item { width: 205px; height: 41px; margin-top: 1px; display: flex; background: #e4e4e4; border: 1px solid #b4b4b4; border-bottom: 2px solid #8e8e8e; border-radius: 3px; }
.dl-main { width: 191px; display: flex; align-items: center; padding-left: 9px; border-right: 1px solid #bcbcbc; }
.dl-thumb { width: 16px; height: 15px; flex: none; border: 2px solid #aaa; background: linear-gradient(135deg, #333, #888); }
.dl-name { margin-left: 12px; font: 15.500px "DejaVu Sans", sans-serif; color: #111; }
.dl-drop { flex: 1; position: relative; }
.dl-caret { position: absolute; left: 3px; top: 12px; border-top: 4px solid #666; border-left: 3.500px solid transparent; border-right: 3.500px solid transparent; }
.shelf-right { display: flex; align-items: center; }
.dl-arrow { width: 12px; height: 12px; flex: none; margin-top: 1px; }
.dl-all { margin-left: 7px; font: 15.300px "DejaVu Sans", sans-serif; color: #111; text-decoration: underline; white-space: nowrap; }
.dl-close { margin-left: 18px; width: 12px; font: 700 18px/18px "DejaVu Sans", sans-serif; color: #555; text-align: center; }
```
